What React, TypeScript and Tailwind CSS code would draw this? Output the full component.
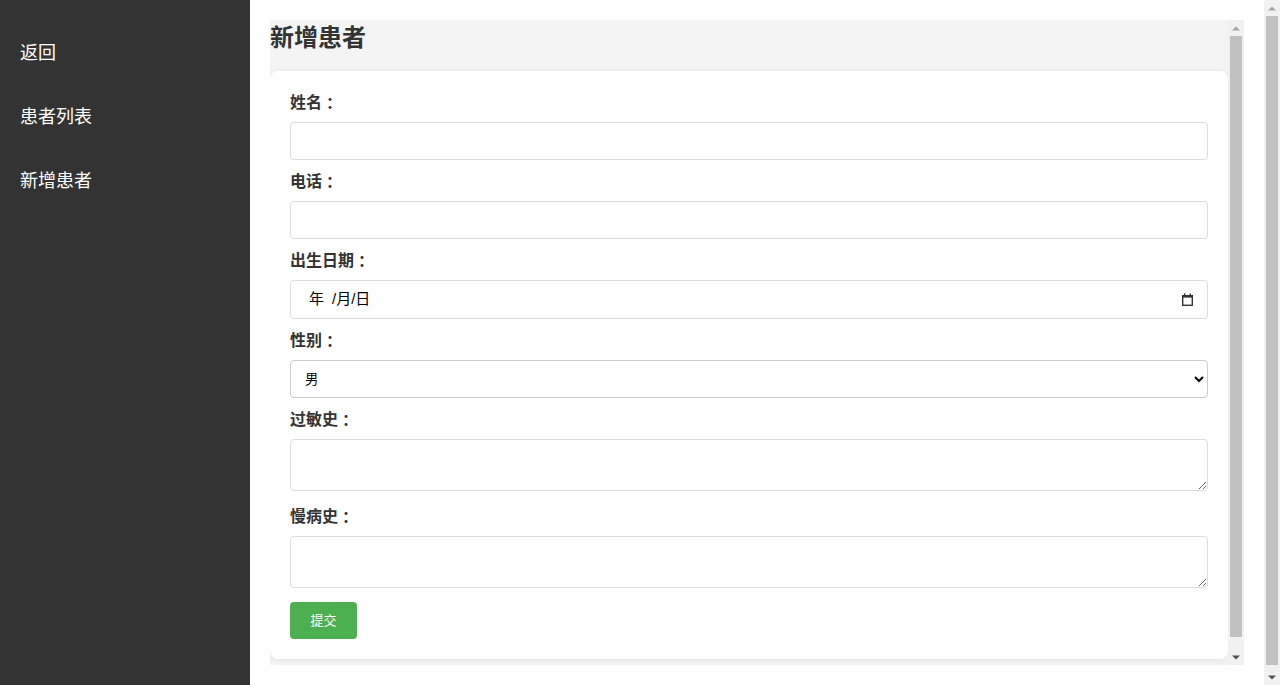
import React from "react";

const font = { fontFamily: '"Liberation Sans", "Noto Sans CJK SC", sans-serif' };
const colonFont = { fontFamily: '"Noto Sans CJK TC", "Noto Sans CJK JP", sans-serif' };

function Label({ text }: { text: string }) {
  return (
    <label className="block h-[23px] overflow-hidden text-[16px] font-bold leading-[23px] mb-[8px] text-[#333]">
      {text}
      <span className="inline-block w-[16px] text-center align-top leading-[23px]" style={colonFont}>
        ：
      </span>
    </label>
  );
}

function Arrow({ up, dark }: { up?: boolean; dark?: boolean }) {
  return (
    <svg width="8" height="5" viewBox="0 0 8 5">
      <polygon
        points={up ? "0,4.5 8,4.5 4,0.5" : "0,0.5 8,0.5 4,4.5"}
        fill={dark ? "#505050" : "#a3a3a3"}
      />
    </svg>
  );
}

function Scrollbar({ thumb }: { thumb: number }) {
  return (
    <div className="w-[16px] shrink-0 flex flex-col bg-[#f1f1f1]">
      <div className="h-[16px] flex items-center justify-center">
        <Arrow up />
      </div>
      <div className="mx-[2px] bg-[#c1c1c1]" style={{ height: thumb }} />
      <div className="flex-1" />
      <div className="h-[16px] flex items-center justify-center">
        <Arrow dark />
      </div>
    </div>
  );
}

const inputCls =
  "block w-full h-[38px] px-[10px] border border-[#ddd] rounded-[4px] mb-[10px] text-[13px] outline-none bg-white";

export default function App() {
  return (
    <div className="flex h-[685px] overflow-hidden bg-white text-[#333]" style={font}>
      <aside className="w-[250px] shrink-0 bg-[#333] pt-[21px] px-[20px]">
        {["返回", "患者列表", "新增患者"].map((t) => (
          <div key={t} className="py-[19px] leading-[26px] text-[18px] text-white">
            {t}
          </div>
        ))}
      </aside>
      <main className="flex-1 min-w-0 py-[20px] px-[20px]">
        <div className="h-[645px] flex bg-[#f4f4f4] overflow-hidden">
          <div className="flex-1 min-w-0">
            <h2 className="m-0 text-[24px] font-bold leading-[35px] mb-[16px] text-[#333]">新增患者</h2>
            <div className="bg-white rounded-[8px] p-[20px] mb-[20px] shadow-[0_1px_6px_rgba(0,0,0,0.08)]">
              <Label text="姓名" />
              <input type="text" className={inputCls} />
              <Label text="电话" />
              <input type="text" className={inputCls} />
              <Label text="出生日期" />
              <div className="flex items-center w-full h-[39px] pl-[18px] pr-[13px] border border-[#ddd] rounded-[4px] mb-[10px] text-[15px] text-black">
                <span className="flex-1">
                  年<span className="ml-[8px]">/月/日</span>
                </span>
                <svg width="13" height="13" viewBox="0 0 13 13" className="text-[#333]">
                  <rect x="1.7" y="2.7" width="9.6" height="9.6" fill="none" stroke="currentColor" strokeWidth="1.4" />
                  <rect x="1" y="2" width="11" height="2.6" fill="currentColor" />
                  <rect x="3" y="0.5" width="1.4" height="2" fill="currentColor" />
                  <rect x="8.6" y="0.5" width="1.4" height="2" fill="currentColor" />
                </svg>
              </div>
              <Label text="性别" />
              <select className="block w-full h-[38px] px-[10px] border border-[#ccc] rounded-[4px] mb-[10px] text-[13.33px] bg-white text-black outline-none">
                <option>男</option>
                <option>女</option>
              </select>
              <Label text="过敏史" />
              <textarea className="block w-full h-[52px] p-[10px] border border-[#ddd] rounded-[4px] mb-[14px] text-[13px] outline-none" />
              <Label text="慢病史" />
              <textarea className="block w-full h-[52px] p-[10px] border border-[#ddd] rounded-[4px] mb-[14px] text-[13px] outline-none" />
              <button className="block w-[67px] h-[37px] bg-[#4caf50] text-white text-[13px] rounded-[4px]">
                提交
              </button>
            </div>
          </div>
          <Scrollbar thumb={601} />
        </div>
      </main>
      <Scrollbar thumb={649} />
    </div>
  );
}
